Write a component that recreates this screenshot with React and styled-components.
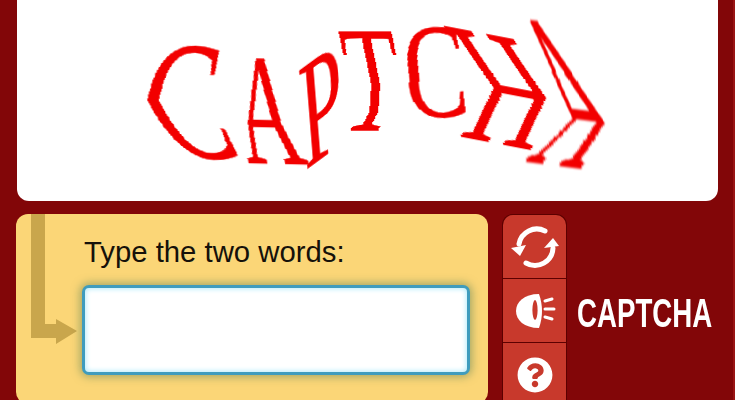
import React from 'react';
import styled, { createGlobalStyle } from 'styled-components';
import { FaQuestionCircle } from 'react-icons/fa';

const GlobalStyle = createGlobalStyle`
  html, body {
    margin: 0;
    padding: 0;
    background: #820608;
  }
`;

const Page = styled.div`
  width: 735px;
  height: 400px;
  overflow: hidden;
  background: #820608;
  border-right: 2px solid #991414;
  box-sizing: border-box;
  font-family: 'Liberation Sans', Arial, sans-serif;
`;

const ImagePanel = styled.div`
  width: 701px;
  height: 213px;
  margin: -12px 0 0 17px;
  background: #fff;
  border-radius: 12px;
`;

const CaptchaArt = styled.svg`
  display: block;
  width: 100%;
  height: 100%;
`;

const WarpedLetter = styled.text`
  font-family: 'Liberation Serif', 'Times New Roman', serif;
  font-size: 100px;
  fill: #f20000;
  stroke: #f20000;
  stroke-width: 0.3px;
`;

const BottomRow = styled.div`
  display: flex;
  align-items: flex-start;
  margin: 13px 0 0 16px;
`;

const AnswerPanel = styled.div`
  display: flex;
  width: 472px;
  height: 190px;
  flex-shrink: 0;
  padding-left: 15px;
  box-sizing: border-box;
  background: #fbd677;
  border-radius: 12px;
`;

const GuideArrow = styled.svg`
  display: block;
  width: 47px;
  height: 131px;
  flex-shrink: 0;
  margin-right: 4px;
  fill: #c9a64c;
`;

const AnswerForm = styled.div`
  display: flex;
  flex-direction: column;
  width: 388px;
`;

const Prompt = styled.label`
  margin: 20px 0 0 2px;
  font-size: 29.3px;
  line-height: 36px;
  color: #15110a;
`;

const AnswerInput = styled.input`
  width: 388px;
  height: 90px;
  margin-top: 15px;
  box-sizing: border-box;
  background: #fff;
  border: 3px solid #3f9cbd;
  border-radius: 7px;
  outline: none;
  box-shadow: 0 0 9px 2px rgba(92, 130, 88, 0.55), inset 0 0 5px 1px #b5ecfb;
`;

const ButtonStack = styled.div`
  display: flex;
  flex-direction: column;
  flex-shrink: 0;
  width: 63px;
  margin-left: 14px;
  background: #5c0000;
  border: 1px solid #5c0000;
  border-bottom: 0;
  border-radius: 11px 11px 0 0;
  overflow: hidden;
`;

const IconButton = styled.button`
  display: flex;
  align-items: center;
  justify-content: center;
  height: 63px;
  padding: 0;
  margin-bottom: 1px;
  border: 0;
  color: #fff;
  background: #c8392c;
`;

const BrandSlot = styled.div`
  align-self: center;
  width: 135px;
  margin: 6px 0 0 10px;
`;

const Brand = styled.div`
  font-size: 41px;
  line-height: 41px;
  font-weight: bold;
  white-space: nowrap;
  color: #fff;
  transform: scaleX(0.675);
  transform-origin: left center;
`;

const Glyph = styled.svg`
  display: block;
  fill: #fff;
`;

// U and V are the pixel vectors of one em across and one em up, bend is
// [local y, sideways shift] down the glyph.
const LETTERS = [
  { ch: 'C', o: [148, 156], u: [110, 3], v: [-15, -169], bend: [[-70, 16], [-33, 0], [0, 22]] },
  { ch: 'A', o: [248, 163], u: [85, 2], v: [-27, -159], bend: [[-67, 0], [-25, -8], [0, 0]] },
  { ch: 'P', o: [305, 171], u: [75, -55], v: [-12, -150], bend: [[-66, 0], [0, 0]] },
  { ch: 'T', o: [337, 130], u: [91, 0], v: [0, -150], bend: [[-66, 0], [-30, 12], [-12, 10], [0, 0]] },
  { ch: 'C', o: [402, 120], u: [96, -7], v: [-2, -135], bend: [[-66, -4], [-33, 4], [-15, 3], [0, 6]] },
  { ch: 'H', o: [458, 136], u: [105, 20], v: [-29, -170], bend: [[-66, 0], [-33, 32], [0, 0]] },
  { ch: 'A', o: [525, 161], u: [78, 10], v: [-31, -219], bend: [[-67, 0], [-22, 55], [0, 0]] },
];

const BOX = { x: -40, y: -100, width: 180, height: 130 };
const BAND = 1;

const bendAt = (bend, y) => {
  if (y <= bend[0][0]) return bend[0][1];
  for (let i = 1; i < bend.length; i++) {
    const [y0, s0] = bend[i - 1];
    const [y1, s1] = bend[i];
    if (y <= y1) return s0 + ((s1 - s0) * (y - y0)) / (y1 - y0);
  }
  return bend[bend.length - 1][1];
};

const BendFilter = ({ id, bend }) => {
  const scale = 2 * Math.max(...bend.map(([, s]) => Math.abs(s))) + 4;
  const rows = Array.from(
    { length: Math.ceil(BOX.height / BAND) },
    (_, i) => BOX.y + i * BAND
  );
  const color = (y) =>
    `rgb(${Math.round(255 * (0.5 - bendAt(bend, y) / scale))},128,0)`;
  return (
    <filter
      id={id}
      filterUnits="userSpaceOnUse"
      primitiveUnits="userSpaceOnUse"
      colorInterpolationFilters="sRGB"
      {...BOX}
    >
      {rows.map((y) => (
        <feFlood
          key={y}
          x={BOX.x}
          y={y}
          width={BOX.width}
          height={BAND}
          floodColor={color(y + BAND / 2)}
          result={`row${y}`}
        />
      ))}
      <feMerge result="map">
        {rows.map((y) => (
          <feMergeNode key={y} in={`row${y}`} />
        ))}
      </feMerge>
      <feDisplacementMap
        in="SourceGraphic"
        in2="map"
        scale={scale}
        xChannelSelector="R"
        yChannelSelector="G"
        result="bent"
      />
      <feGaussianBlur in="bent" stdDeviation="0.4" />
    </filter>
  );
};

const CaptchaWord = () => (
  <CaptchaArt viewBox="17 -12 701 213">
    <defs>
      {LETTERS.map((l, i) => (
        <BendFilter key={i} id={`bend-${i}`} bend={l.bend} />
      ))}
    </defs>
    {LETTERS.map((l, i) => (
      <g
        key={i}
        transform={`matrix(${l.u[0] / 100} ${l.u[1] / 100} ${-l.v[0] / 100} ${-l.v[1] / 100} ${l.o[0]} ${l.o[1]})`}
      >
        <WarpedLetter filter={`url(#bend-${i})`}>{l.ch}</WarpedLetter>
      </g>
    ))}
  </CaptchaArt>
);

const RefreshIcon = () => (
  <Glyph width="50" height="44" viewBox="0 0 50 44">
    <path d="M35 6 A18 18 0 0 0 9 19" fill="none" stroke="#fff" strokeWidth="5" strokeLinecap="round" />
    <path d="M1 23 L16 20 L10 31 Z" />
    <path d="M43 23 A18 18 0 0 1 16 38" fill="none" stroke="#fff" strokeWidth="5" strokeLinecap="round" />
    <path d="M43 13 L34 23 L49 21 Z" />
  </Glyph>
);

const AudioIcon = () => (
  <Glyph width="42" height="38" viewBox="0 0 42 38">
    <path d="M25 2 C10 2 2 10 2 19 C2 28 10 36 25 36 C27 30 28 25 28 19 C28 13 27 8 25 2 Z" />
    <ellipse cx="21" cy="18" rx="2.6" ry="10" fill="#c8392c" />
    <path d="M31 9 L38 7" stroke="#fff" strokeWidth="3" strokeLinecap="round" />
    <path d="M31 17 L40 17" stroke="#fff" strokeWidth="3" strokeLinecap="round" />
    <path d="M31 25 L38 27" stroke="#fff" strokeWidth="3" strokeLinecap="round" />
  </Glyph>
);

const App = () => (
  <Page>
    <GlobalStyle />
    <ImagePanel>
      <CaptchaWord />
    </ImagePanel>
    <BottomRow>
      <AnswerPanel>
        <GuideArrow viewBox="0 0 47 131">
          <path d="M0 0 H14 V110 H25 V105 L46 117 L25 130 V124 H0 Z" />
        </GuideArrow>
        <AnswerForm>
          <Prompt htmlFor="answer">Type the two words:</Prompt>
          <AnswerInput id="answer" type="text" />
        </AnswerForm>
      </AnswerPanel>
      <ButtonStack>
        <IconButton aria-label="Get a new challenge">
          <RefreshIcon />
        </IconButton>
        <IconButton aria-label="Get an audio challenge">
          <AudioIcon />
        </IconButton>
        <IconButton aria-label="Help">
          <FaQuestionCircle size={36} />
        </IconButton>
      </ButtonStack>
      <BrandSlot>
        <Brand>CAPTCHA</Brand>
      </BrandSlot>
    </BottomRow>
  </Page>
);

export default App;
